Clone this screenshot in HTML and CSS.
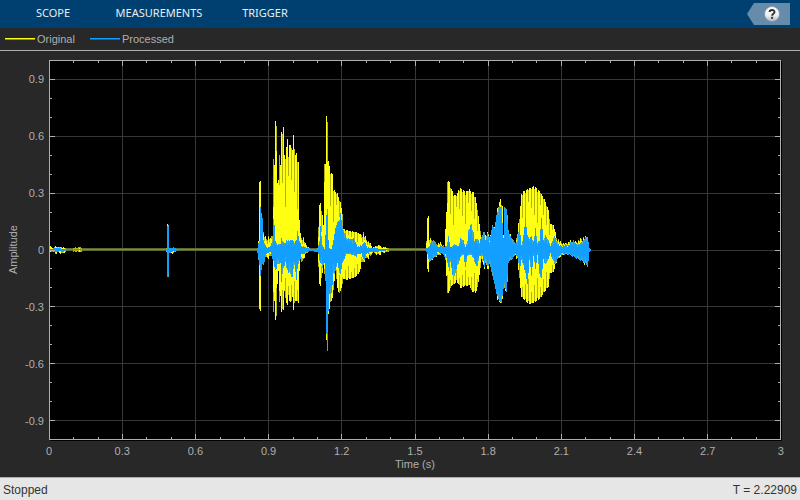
FILE: index.html
```
<!DOCTYPE html>
<html lang="en">
<head>
  <meta charset="UTF-8" />
  <title>Time Scope</title>
  <link rel="stylesheet" href="styles.css">
</head>
<body>
  <header class="toolstrip">
    <nav class="tabs">
      <button class="tab">SCOPE</button>
      <button class="tab">MEASUREMENTS</button>
      <button class="tab">TRIGGER</button>
    </nav>
    <button class="help-btn" aria-label="Help">
      <svg width="16" height="16" viewBox="0 0 16 16">
        <defs>
          <linearGradient id="ball" x1="0" y1="0" x2="0" y2="1">
            <stop offset="0" stop-color="#fff" />
            <stop offset="0.6" stop-color="#eee" />
            <stop offset="1" stop-color="#aeb6bd" />
          </linearGradient>
        </defs>
        <circle cx="8" cy="8" r="7.5" fill="url(#ball)" stroke="#8296a8" stroke-width="0.8" />
        <path d="M5.6 6.1C5.6 3.3 10.5 3.3 10.5 6C10.5 7.7 8.1 7.8 8.1 9.8" fill="none" stroke="#2b333b" stroke-width="1.9" />
        <rect x="7.1" y="10.8" width="2" height="2" fill="#2b333b" />
      </svg>
    </button>
  </header>

  <div class="legend">
    <span class="legend-item"><i class="swatch original"></i>Original</span>
    <span class="legend-item"><i class="swatch processed"></i>Processed</span>
  </div>

  <main class="scope">
    <div class="y-title">Amplitude</div>
    <div class="y-labels">
      <span>0.9</span><span>0.6</span><span>0.3</span><span>0</span><span>-0.3</span><span>-0.6</span><span>-0.9</span>
    </div>
    <svg class="plot" viewBox="49 60 732 380" preserveAspectRatio="none">
      <path id="grid" class="grid" />
      <path class="trace original-flat" d="M50 249.5H590" />
      <path id="originalDim" class="trace original-dim" />
      <path id="original" class="trace original-line" />
      <path id="processedDim" class="trace processed-dim" />
      <path id="processed" class="trace processed-line" />
      <path class="trace processed-line" d="M50 249.5H590" />
      <path id="ticks" class="ticks" />
      <rect class="frame" x="49.5" y="60.5" width="731" height="379" />
    </svg>
    <div class="x-labels">
      <span>0</span><span>0.3</span><span>0.6</span><span>0.9</span><span>1.2</span><span>1.5</span><span>1.8</span><span>2.1</span><span>2.4</span><span>2.7</span><span>3</span>
    </div>
    <div class="x-title">Time (s)</div>
  </main>

  <footer class="status">
    <span>Stopped</span>
    <span>T = 2.22909</span>
  </footer>

  <script src="script.js"></script>
</body>
</html>
```

FILE: styles.css
```
* {
  box-sizing: border-box;
}
body {
  margin: 0;
  height: 100vh;
  display: flex;
  flex-direction: column;
  background: #282828;
  color: #afafaf;
  font-family: "Liberation Sans", Arial, sans-serif;
  font-size: 11px;
}
button {
  border: none;
  padding: 0;
  cursor: pointer;
}
.toolstrip {
  display: flex;
  justify-content: space-between;
  align-items: center;
  height: 28px;
  padding-right: 10px;
  background: #004070;
}
.tabs {
  display: flex;
}
.tab {
  width: 106px;
  background: none;
  color: #e8eef3;
  font-family: "Noto Sans", sans-serif;
  font-size: 11px;
  line-height: 24px;
  padding-bottom: 2px;
}
.help-btn {
  display: flex;
  align-items: center;
  justify-content: center;
  width: 43px;
  height: 22px;
  padding-left: 6px;
  background: #668cab;
  clip-path: polygon(0 50%, 7px 0, 100% 0, 100% 100%, 7px 100%);
}
.legend {
  display: flex;
  align-items: center;
  gap: 15px;
  height: 23px;
  padding-left: 5px;
  border-bottom: 1px solid #afafaf;
}
.legend-item {
  display: flex;
  align-items: center;
  gap: 2px;
}
.swatch {
  width: 30px;
  height: 2px;
}
.swatch.original {
  background: linear-gradient(#ffff11 50%, #939319 50%);
}
.swatch.processed {
  background: linear-gradient(#139fff 50%, #1d6394 50%);
}

/* chart area */
.scope {
  flex: 1;
  min-height: 0;
  display: grid;
  grid-template-columns: 20px 29px 1fr;
  grid-template-rows: 1fr auto auto;
  padding: 9px 19px 6px 0;
}
.plot {
  grid-column: 3;
  width: 100%;
  height: 100%;
  min-height: 0;
  background: #000;
  box-shadow: 1px 1px #000;
}
.y-title {
  justify-self: end;
  writing-mode: vertical-rl;
  transform: rotate(180deg);
  text-align: center;
  line-height: 13px;
}
.y-labels {
  display: flex;
  flex-direction: column;
  justify-content: space-between;
  padding: 13px 5px 12px 0;
  text-align: right;
  line-height: 13px;
}
.x-labels {
  grid-column: 3;
  display: flex;
  justify-content: space-between;
  margin: 5px -15px 0;
  line-height: 13px;
}
.x-labels span {
  width: 30px;
  text-align: center;
}
.x-title {
  grid-column: 3;
  text-align: center;
  line-height: 13px;
}
.grid {
  stroke: #373737;
}
.ticks {
  stroke: #afafaf;
}
.grid,
.ticks,
.frame,
.trace {
  fill: none;
  shape-rendering: crispEdges;
}
.frame {
  stroke: #afafaf;
}
.original-flat {
  stroke: #5b6a2c;
  stroke-width: 3;
}
.original-dim {
  stroke: #b4b40e;
}
.original-line {
  stroke: #ffff11;
}
.processed-dim {
  stroke: #4fa8b8;
}
.processed-line {
  stroke: #139fff;
}
.status {
  display: flex;
  justify-content: space-between;
  align-items: center;
  height: 23px;
  padding: 1px 3px 0;
  border-top: 1px solid #afafaf;
  background: #e6e6e6;
  color: #333;
  font-size: 12px;
}
```

FILE: script.js
```
// Each sample is x, highest y, lowest y in plot units
const original = [
  50,246,252, 53,248,251, 55,246,253, 58,247,252, 62,247,253, 67,248,250, 79,247,251, 83,248,250, 120,248,250, 165,248,250,
  166,248,251, 167,224,276, 168,224,276, 169,248,252, 173,247,253, 176,248,250, 240,248,250, 257,248,251, 258,240,262,
  259,182,308, 260,181,310, 261,218,265, 262,228,263, 264,234,260, 266,237,258, 268,235,258, 270,238,256, 272,230,254,
  273,154,313, 274,165,300, 275,121,319, 276,123,318, 277,183,283, 278,180,270, 279,152,302, 280,165,295, 281,132,311,
  283,127,309, 284,155,290, 285,154,299, 287,139,304, 288,155,295, 289,145,300, 291,145,302, 292,150,296,
  293,135,309, 295,155,300, 296,153,300, 298,162,302, 299,220,270, 300,233,258, 301,236,266, 303,236,259,
  305,243,254, 308,247,251, 311,248,250, 317,248,251,
  319,205,283, 320,203,285, 322,215,272, 323,225,262, 324,162,273, 325,164,270, 326,116,339, 327,118,339,
  328,161,313, 330,171,303, 332,174,297, 333,188,290, 335,192,270, 337,193,287, 339,200,294,
  340,202,290, 342,213,284, 343,229,278, 346,230,279, 350,231,278, 355,232,276, 358,233,273, 360,234,268,
  363,231,262, 366,238,259, 370,243,256, 372,247,252, 375,246,253, 379,244,255, 381,247,252, 384,247,252,
  390,248,250, 425,248,250, 426,240,252, 427,218,268, 428,216,271, 429,238,260, 433,239,258, 436,243,256, 440,242,254,
  444,246,252, 446,212,275, 447,180,294, 449,182,290, 451,189,285, 454,195,283, 456,195,280, 458,190,283,
  460,188,287, 465,192,285, 469,189,284, 471,192,290, 473,192,291, 475,197,292, 477,208,287, 479,224,274,
  481,238,262, 484,236,268, 487,232,268, 490,235,267, 492,228,275, 495,226,285, 497,208,299, 500,199,302,
  502,206,298, 503,235,285, 505,210,290, 507,214,282, 508,230,262, 511,236,258, 515,243,255,
  517,228,260, 519,218,278, 521,194,296, 523,191,298, 527,189,302, 530,188,303, 533,186,302, 536,188,300,
  540,192,297, 544,199,291, 548,210,286, 550,224,272, 553,225,271, 556,236,262, 560,241,256, 565,243,254,
  570,240,254, 575,241,256, 580,238,260, 584,236,264, 587,235,262, 588,247,252, 590,248,250
];
const processed = [
  50,249,250, 54,248,252, 60,248,250, 62,249,251, 66,249,249, 166,249,250, 167,226,276, 168,226,276, 169,247,255,
  171,248,251, 173,247,251, 177,249,249, 256,249,249, 259,240,265, 260,207,275, 262,218,263, 263,240,264, 265,245,257,
  267,247,252, 270,246,252, 272,240,258, 273,219,260, 274,225,266, 275,241,270, 277,244,265, 280,244,262, 281,238,281,
  283,242,268, 285,243,262, 286,240,268, 288,240,272, 290,240,275, 292,240,276, 294,242,265, 296,240,279, 297,231,268, 299,240,260,
  301,245,256, 305,247,252, 310,249,250, 317,249,251, 319,240,260, 320,226,262, 322,244,268, 324,250,262, 325,235,280,
  326,215,333, 327,209,350, 328,240,310, 329,248,293, 331,250,292, 333,240,275, 335,228,270, 337,222,262,
  339,220,272, 340,213,273, 342,226,262, 344,232,258, 346,237,253, 350,239,253, 353,238,255, 357,245,256,
  360,245,253, 363,243,258, 364,241,259, 367,246,253, 371,248,251, 385,249,250, 390,249,249, 425,249,249,
  427,247,254, 429,246,262, 431,240,259, 434,240,257, 438,247,252, 440,245,253, 446,246,258, 448,236,266, 449,241,272, 450,247,262,
  452,246,274, 454,244,277, 456,245,268, 458,246,264, 460,238,256, 463,240,254, 465,247,268, 467,240,255, 468,230,254,
  471,223,254, 473,232,258, 474,240,262, 477,238,267, 479,242,255, 482,233,255, 484,231,266, 485,240,260, 487,231,266,
  489,241,264, 492,225,275, 494,228,283, 496,215,293, 499,206,300, 501,207,302, 503,238,288, 504,207,284,
  506,209,291, 508,230,262, 510,236,260, 512,238,258, 515,243,254, 517,240,256, 519,224,270, 521,245,260,
  523,235,265, 525,218,272, 527,235,283, 529,238,260, 531,236,275, 533,241,256, 535,228,268, 537,242,255, 539,240,274,
  541,218,277, 543,240,258, 545,235,265, 548,240,258, 550,246,254, 552,240,258, 554,235,264, 557,243,259, 560,245,254, 564,244,254,
  568,244,254, 573,240,256, 577,245,258, 581,242,260, 584,238,262, 587,236,267, 589,247,252, 590,249,250
];

// Top and bottom of a trace at pixel column x
function rangeAt(data, x) {
  let i = 0;
  while (i < data.length - 6 && data[i + 3] < x) i += 3;
  const t = Math.min(1, Math.max(0, (x - data[i]) / (data[i + 3] - data[i])));
  return [data[i + 1] + t * (data[i + 4] - data[i + 1]), data[i + 2] + t * (data[i + 5] - data[i + 2])];
}

// One vertical stroke per column; big swings are shortened by gap on every
// third column, small ones by ripple so that they look like noise
function columns(data, gap, ripple, minHeight) {
  let d = '';
  for (let x = 50; x <= 590; x++) {
    let [top, bottom] = rangeAt(data, x);
    const height = bottom - top;
    if (height < minHeight) continue;
    if (height > 35) {
      if (x % 3 === 0) {
        top += (249 - top) * gap * (2 + (x / 3) % 4) / 4;
        bottom += (249 - bottom) * gap * (2 + (x / 3) % 3) / 4;
      }
    } else if (height > 3) {
      top += (249 - top) * ripple * ((x * 7) % 5) / 4;
      bottom += (249 - bottom) * ripple * ((x * 3) % 4) / 3;
    }
    d += `M${x + 0.5} ${Math.round(top)}V${Math.round(bottom) + 1}`;
  }
  return d;
}

document.getElementById('originalDim').setAttribute('d', columns(original, 0.04, 0.3, 3));
document.getElementById('original').setAttribute('d', columns(original, 0.45, 0.6, 4));
document.getElementById('processedDim').setAttribute('d', columns(processed, 0, 0.1, 12));
document.getElementById('processed').setAttribute('d', columns(processed, 0.15, 0.5, 1));

// Grid lines and ticks
let grid = '';
let ticks = '';
for (let i = 1; i < 30; i++) {
  const x = Math.round(49 + i * 24.37) + 0.5;
  const len = i % 3 === 0 ? 6 : 3;
  if (i % 3 === 0) grid += `M${x} 60V440`;
  ticks += `M${x} 60v${len}M${x} 440v${-len}`;
}
for (let i = -9; i <= 9; i++) {
  const y = Math.round(249.5 + i * 18.95) + 0.5;
  const len = i % 3 === 0 ? 6 : 3;
  if (i % 3 === 0) grid += `M49 ${y}H781`;
  ticks += `M49 ${y}h${len}M781 ${y}h${-len}`;
}
document.getElementById('grid').setAttribute('d', grid);
document.getElementById('ticks').setAttribute('d', ticks);
```
